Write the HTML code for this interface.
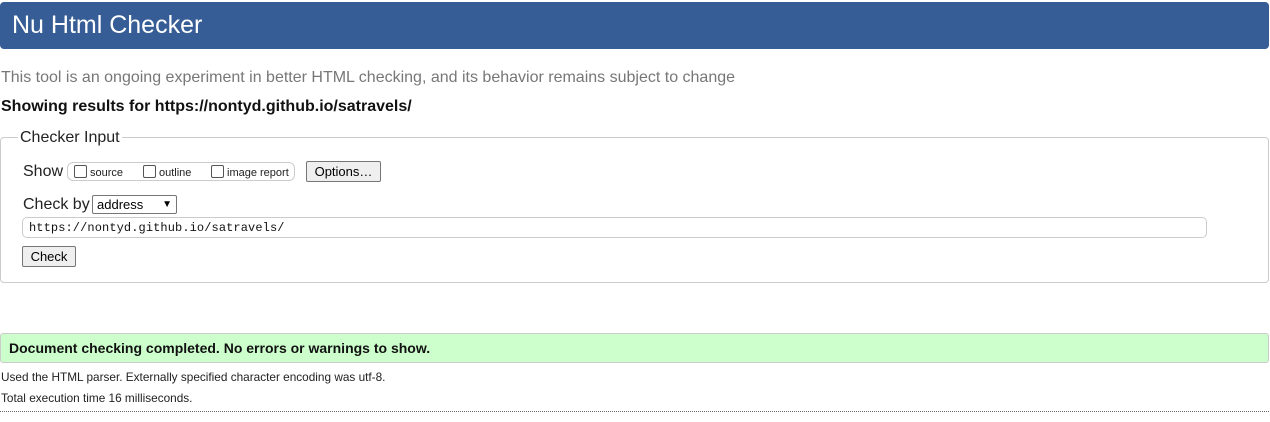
<!DOCTYPE html>
<html><head><style>
body{margin:0;width:1270px;height:422px;position:relative;font-family:"Liberation Sans",Arial,sans-serif;background:#fff;overflow:hidden}
.a{position:absolute;white-space:nowrap}
.hdr{left:0;top:2px;width:1269px;height:47px;background:#365d95;border-radius:4px;color:#fff;font-size:25px;line-height:47px;padding-left:12px;box-sizing:border-box}
.cb{display:inline-block;width:11px;height:11px;border:1px solid #555;border-radius:2px;background:#fff;vertical-align:-2px;margin-right:3px}
.btn{border:1px solid #767676;background:#efefef;border-radius:2px;font-size:13px;color:#000;box-sizing:border-box;text-align:center}
</style></head><body>
<div class="a hdr">Nu Html Checker</div>
<div class="a" style="left:1px;top:69px;font-size:16px;color:#777">This tool is an ongoing experiment in better HTML checking, and its behavior remains subject to change</div>
<div class="a" style="left:1px;top:98px;font-size:16px;font-weight:bold;color:#111">Showing results for https://nontyd.github.io/satravels/</div>
<div class="a" style="left:0;top:137px;width:1269px;height:146px;border:1px solid #ccc;border-radius:4px;box-sizing:border-box"></div>
<div class="a" style="left:18px;top:129px;background:#fff;padding:0 2px;font-size:16px;color:#222">Checker Input</div>
<div class="a" style="left:23px;top:163px;font-size:16px;color:#222">Show</div>
<div class="a" style="left:67px;top:162px;width:228px;height:19px;border:1px solid #ccc;border-radius:6px;box-sizing:border-box"></div>
<div class="a" style="left:74px;top:165px;font-size:11px;color:#222"><span class="cb"></span>source</div>
<div class="a" style="left:143px;top:165px;font-size:11px;color:#222"><span class="cb"></span>outline</div>
<div class="a" style="left:211px;top:165px;font-size:11px;color:#222"><span class="cb"></span>image report</div>
<div class="a btn" style="left:306px;top:161px;width:75px;height:21px;line-height:19px">Options…</div>
<div class="a" style="left:23px;top:196px;font-size:16px;color:#222">Check by</div>
<div class="a" style="left:92px;top:195px;width:85px;height:19px;border:1px solid #767676;border-radius:2px;box-sizing:border-box;font-size:13px;line-height:17px;padding-left:4px">address<span style="position:absolute;right:4px;top:0;font-size:10px">▼</span></div>
<div class="a" style="left:22px;top:217px;width:1185px;height:21px;border:1px solid #ccc;border-radius:5px;box-sizing:border-box;font-family:'Liberation Mono',monospace;font-size:12px;letter-spacing:0.1px;line-height:20px;padding-left:6px;color:#111">https://nontyd.github.io/satravels/</div>
<div class="a btn" style="left:22px;top:246px;width:54px;height:21px;line-height:19px">Check</div>
<div class="a" style="left:0;top:333px;width:1269px;height:30px;background:#ccffcc;border:1px solid #ccc;border-radius:3px;box-sizing:border-box;font-size:14px;font-weight:bold;line-height:28px;padding-left:8px;color:#111">Document checking completed. No errors or warnings to show.</div>
<div class="a" style="left:1px;top:370px;font-size:11.8px;color:#222">Used the HTML parser. Externally specified character encoding was utf-8.</div>
<div class="a" style="left:1px;top:391px;font-size:11.8px;color:#222">Total execution time 16 milliseconds.</div>
<div class="a" style="left:0;top:411px;width:1269px;border-top:1px dotted #666"></div>
</body></html>
